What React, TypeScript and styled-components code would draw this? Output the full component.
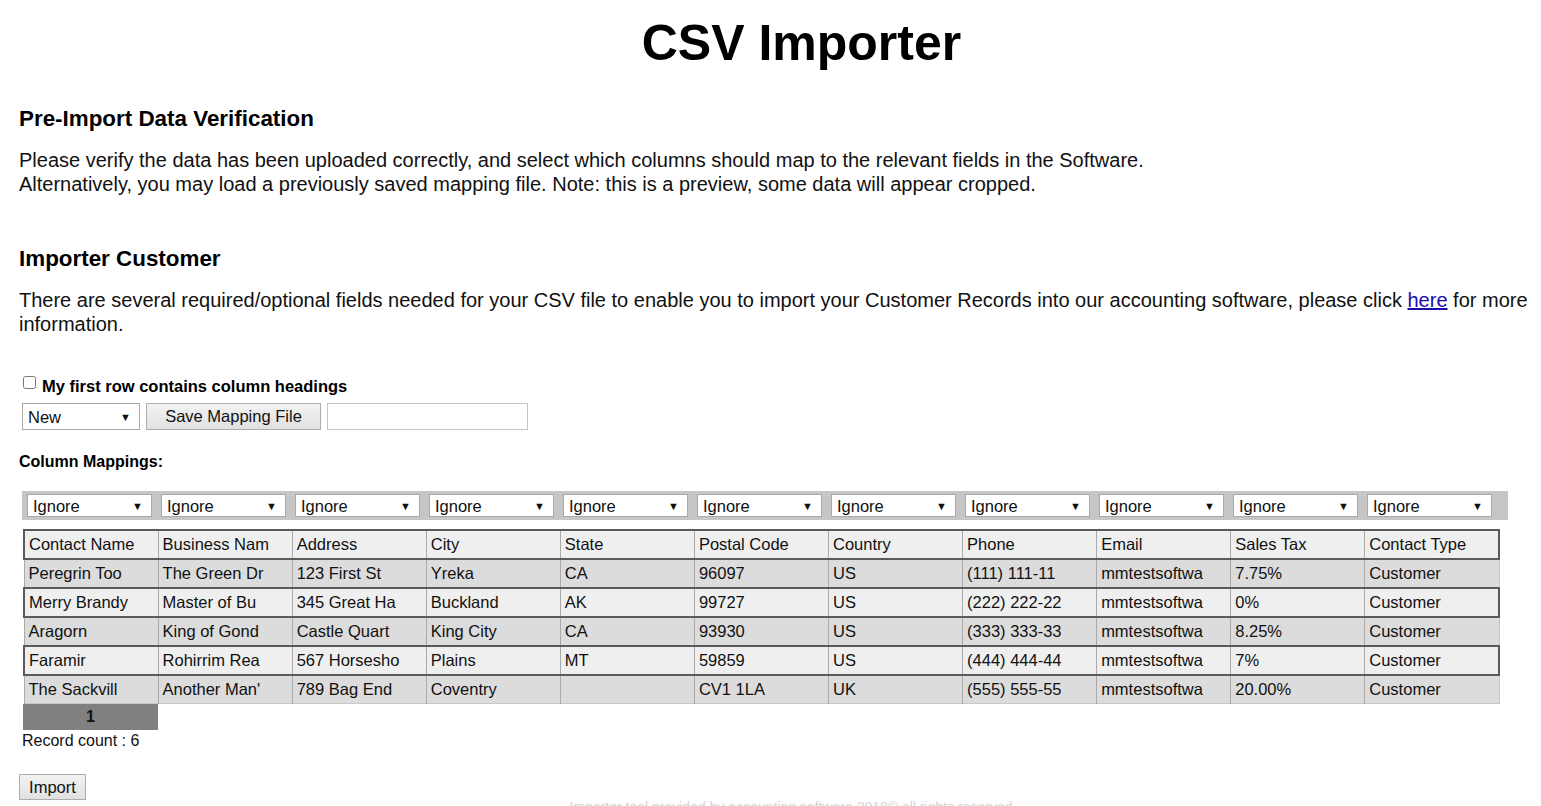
import styled, { createGlobalStyle } from 'styled-components';

const GlobalStyle = createGlobalStyle`
  body {
    margin: 0;
    background: #fff;
    color: #111;
    font-family: "Liberation Sans", Arial, sans-serif;
  }
`;

const rows: string[][] = [
  ['Contact Name', 'Business Nam', 'Address', 'City', 'State', 'Postal Code', 'Country', 'Phone', 'Email', 'Sales Tax', 'Contact Type'],
  ['Peregrin Too', 'The Green Dr', '123 First St', 'Yreka', 'CA', '96097', 'US', '(111) 111-11', 'mmtestsoftwa', '7.75%', 'Customer'],
  ['Merry Brandy', 'Master of Bu', '345 Great Ha', 'Buckland', 'AK', '99727', 'US', '(222) 222-22', 'mmtestsoftwa', '0%', 'Customer'],
  ['Aragorn', 'King of Gond', 'Castle Quart', 'King City', 'CA', '93930', 'US', '(333) 333-33', 'mmtestsoftwa', '8.25%', 'Customer'],
  ['Faramir', 'Rohirrim Rea', '567 Horsesho', 'Plains', 'MT', '59859', 'US', '(444) 444-44', 'mmtestsoftwa', '7%', 'Customer'],
  ['The Sackvill', 'Another Man\'', '789 Bag End', 'Coventry', '', 'CV1 1LA', 'UK', '(555) 555-55', 'mmtestsoftwa', '20.00%', 'Customer'],
];

const Dropdown = ({ value, width }: { value: string; width: number }) => (
  <SelectWrap $width={width}>
    <Select defaultValue={value}>
      <option>{value}</option>
    </Select>
    <Arrow>▼</Arrow>
  </SelectWrap>
);

const App = () => {
  return (
    <Page>
      <GlobalStyle />
      <Title>CSV Importer</Title>

      <SectionTitle>Pre-Import Data Verification</SectionTitle>
      <Text>
        Please verify the data has been uploaded correctly, and select which columns should map to the relevant fields in the Software.
        <br />
        Alternatively, you may load a previously saved mapping file. Note: this is a preview, some data will appear cropped.
      </Text>

      <SectionTitle $gap={50}>Importer Customer</SectionTitle>
      <Text>
        There are several required/optional fields needed for your CSV file to enable you to import your Customer Records into our accounting software, please click <Link href="#">here</Link> for more information.
      </Text>

      <CheckRow>
        <input type="checkbox" />
        My first row contains column headings
      </CheckRow>

      <Controls>
        <Dropdown value="New" width={118} />
        <Button $width={175}>Save Mapping File</Button>
        <TextInput type="text" />
      </Controls>

      <Caption>Column Mappings:</Caption>

      <MappingBar>
        {rows[0].map((_, i) => (
          <Dropdown key={i} value="Ignore" width={125} />
        ))}
      </MappingBar>

      <Grid>
        <colgroup>
          {rows[0].map((_, i) => (
            <col key={i} style={{ width: 134 }} />
          ))}
        </colgroup>
        <tbody>
          {rows.map((row, r) => (
            <Row key={r} $light={r % 2 === 0}>
              {row.map((cell, c) => (
                <Cell key={c}>{cell}</Cell>
              ))}
            </Row>
          ))}
        </tbody>
      </Grid>

      <Pager>
        <PageCell>1</PageCell>
      </Pager>
      <RecordCount>Record count : 6</RecordCount>

      <Button $width={67} $small>Import</Button>

      <Footer>Importer tool provided by accounting software 2018© all rights reserved</Footer>
    </Page>
  );
};

export default App;

const Page = styled.div`
  padding: 0 8px 0 19px;
  display: flex;
  flex-direction: column;
  align-items: flex-start;
`;

const Title = styled.h1`
  align-self: stretch;
  margin: 14px 0 0;
  padding-left: 51px;
  text-align: center;
  font-size: 50px;
  line-height: 58px;
  font-weight: bold;
  color: #000;
`;

const SectionTitle = styled.h2<{ $gap?: number }>`
  margin: ${p => p.$gap ?? 34}px 0 0;
  font-size: 22.4px;
  line-height: 26px;
  font-weight: bold;
  color: #000;
`;

const Text = styled.p`
  margin: 16px 0 0;
  font-size: 20px;
  line-height: 24px;
  color: #111;
`;

const Link = styled.a`
  color: #1a0dab;
  text-decoration: underline;
`;

const CheckRow = styled.label`
  margin: 40px 0 0 4px;
  display: flex;
  align-items: flex-start;
  gap: 6px;
  font-size: 16.5px;
  line-height: 20px;
  font-weight: bold;
  color: #000;

  input {
    margin: 0;
    width: 13px;
    height: 13px;
  }
`;

const Controls = styled.div`
  margin: 7px 0 0 3px;
  display: flex;
  gap: 6px;
`;

const SelectWrap = styled.div<{ $width: number }>`
  position: relative;
  width: ${p => p.$width}px;
  flex: none;
`;

const Select = styled.select`
  appearance: none;
  width: 100%;
  height: 100%;
  min-height: 23px;
  margin: 0;
  padding: 0 18px 0 5px;
  border: 1px solid #a9a9a9;
  border-radius: 0;
  background: #fff;
  font-family: "Liberation Sans", Arial, sans-serif;
  font-size: 16.5px;
  color: #111;
`;

const Arrow = styled.span`
  position: absolute;
  right: 9px;
  top: 50%;
  transform: translateY(-50%);
  font-size: 11px;
  color: #111;
  pointer-events: none;
`;

const Button = styled.button<{ $width: number; $small?: boolean }>`
  width: ${p => p.$width}px;
  height: ${p => (p.$small ? 26 : 27)}px;
  margin: 0;
  padding: 0;
  border: 1px solid #adadad;
  border-radius: 0;
  background: linear-gradient(#f2f2f2, #e1e1e1);
  font-family: "Liberation Sans", Arial, sans-serif;
  font-size: 16.5px;
  color: #111;
  ${p => p.$small && 'margin-top: 23px;'}
`;

const TextInput = styled.input`
  width: 201px;
  height: 27px;
  box-sizing: border-box;
  margin: 0;
  border: 1px solid #c4c4c4;
  background: #fff;
`;

const Caption = styled.div`
  margin: 22px 0 0;
  font-size: 16px;
  line-height: 20px;
  font-weight: bold;
  color: #000;
`;

const MappingBar = styled.div`
  margin: 19px 0 0 3px;
  width: 1486px;
  box-sizing: border-box;
  height: 29px;
  padding: 3px 5px;
  display: flex;
  gap: 9px;
  background: #c6c6c6;

  ${SelectWrap} {
    height: 23px;
  }
`;

const Grid = styled.table`
  margin: 9px 0 0 4px;
  width: 1477px;
  table-layout: fixed;
  border-collapse: collapse;
  font-size: 16.5px;
`;

const Row = styled.tr<{ $light: boolean }>`
  background: ${p => (p.$light ? '#efefef' : '#dcdcdc')};
  border: ${p => (p.$light ? '2px solid #5a5a5a' : '1px solid #c8c8c8')};
`;

const Cell = styled.td`
  padding: 4px 4px;
  height: 19px;
  line-height: 19px;
  border-left: 1px solid #aaaaaa;
  white-space: nowrap;
  overflow: hidden;
  color: #111;
`;

const Pager = styled.div`
  margin: 0 0 0 4px;
  display: flex;
`;

const PageCell = styled.div`
  width: 135px;
  height: 26px;
  line-height: 26px;
  text-align: center;
  background: #808080;
  font-size: 16px;
  font-weight: bold;
  color: #111;
`;

const RecordCount = styled.div`
  margin: 1px 0 0 3px;
  font-size: 16px;
  line-height: 20px;
  color: #111;
`;

const Footer = styled.div`
  align-self: stretch;
  margin-top: 0;
  padding-left: 30px;
  text-align: center;
  font-size: 14px;
  line-height: 14px;
  color: #d4d4d4;
`;
